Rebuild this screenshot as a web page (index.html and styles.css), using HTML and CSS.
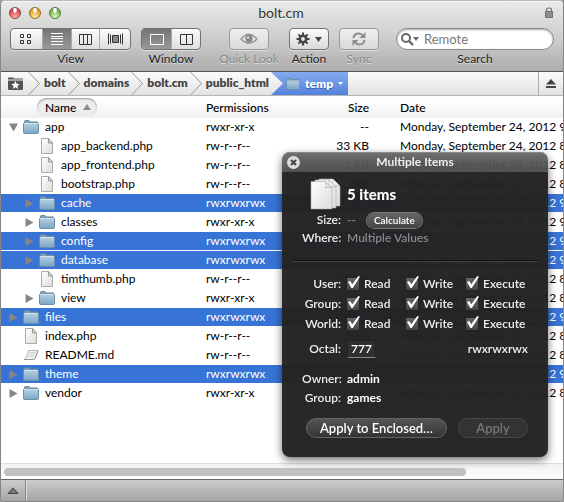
FILE: index.html
```
<!DOCTYPE html>
<html lang="en">
<head>
<meta charset="utf-8">
<title>bolt.cm</title>
<link rel="stylesheet" href="styles.css">
</head>
<body>
<svg class="defs" aria-hidden="true">
  <defs>
    <linearGradient id="gf" x1="0" y1="0" x2="0" y2="1"><stop offset="0" stop-color="#b4d0e1"/><stop offset="1" stop-color="#7ba5c4"/></linearGradient>
    <linearGradient id="gp" x1="0" y1="0" x2="1" y2="1"><stop offset="0" stop-color="#fff"/><stop offset="1" stop-color="#dcdcdc"/></linearGradient>
    <symbol id="folder" viewBox="0 0 16 14">
      <path d="M1.5 3V1.5Q1.5 .5 2.5 .5H5.5Q6.500 .5 6.500 1.500V2H14.500V4H1.500Z" fill="#7f9fb7" stroke="#65869f"/>
      <path d="M.5 3.500H15.500V12.500Q15.500 13.500 14.500 13.500H1.500Q.5 13.500 .5 12.500Z" fill="url(#gf)" stroke="#6890ad"/>
      <path d="M1 3.500H15" stroke="#d1e2ed"/>
    </symbol>
    <symbol id="file" viewBox="0 0 16 16">
      <path d="M2.500 .5H9.500L13.500 5V15.500H2.500Z" fill="url(#gp)" stroke="#aaa"/>
      <path d="M9.500 .5V5H13.500Z" fill="#ddd" stroke="#999"/>
    </symbol>
    <symbol id="doc" viewBox="0 0 16 12">
      <path d="M5.500 1.500H15L12 9.500Q11.500 10.500 10 10.500H1Q3 9.500 3.500 8Z" fill="#f1f1f1" stroke="#b5b5b5"/>
      <path d="M6.500 3.500H12.500M6 5.500H12M5 7.500H11" stroke="#d0d0d0"/>
      <path d="M1 10.500H10.500Q12 10 12.500 8.500L15 2" fill="none" stroke="#999"/>
    </symbol>
    <symbol id="right" viewBox="0 0 8 9"><path d="M0 0L8 4.500L0 9Z" fill="#868686"/></symbol>
    <symbol id="down" viewBox="0 0 9 8"><path d="M0 0H9L4.500 8Z" fill="#868686"/></symbol>
    <symbol id="chev" viewBox="0 0 12 23"><path d="M.5 0L11.500 11.500L.5 23" fill="none" stroke="#999"/></symbol>
  </defs>
</svg>
<div class="window">
  <header class="chrome">
    <div class="titlebar">
      <div class="lights"><button class="light red" aria-label="Close"></button><button class="light amber" aria-label="Minimise"></button><button class="light green" aria-label="Zoom"></button></div>
      <h1>bolt.cm</h1>
      <svg class="lock" viewBox="0 0 8 11"><path d="M1.500 5V3Q1.500 1 4 1T6.500 3V5" fill="none" stroke="#777" stroke-width="1.200"/><path d="M.5 4.500H7.500V10.500H.5Z" fill="#8d8d8d" stroke="#707070"/></svg>
    </div>
    <div class="toolbar">
      <div class="tool view">
        <div class="segments">
          <button aria-label="Icons"><svg width="12" height="12" viewBox="0 0 12 12" fill="none" stroke="#333"><path d="M.5 1.500h3v3h-3zM7.500 1.500h3v3h-3zM.5 7.500h3v3h-3zM7.500 7.500h3v3h-3z"/></svg></button>
          <button class="on" aria-label="List"><svg width="12" height="12" viewBox="0 0 12 12" fill="#fff"><path d="M0 0H12V1H0ZM0 3H12V4H0ZM0 5H12V6H0ZM0 8H12V9H0ZM0 11H12V12H0Z"/></svg></button>
          <button aria-label="Columns"><svg width="13" height="11" viewBox="0 0 13 11" fill="none" stroke="#333"><path d="M.5 .5H12.500V10.500H.5ZM4.500 0V11M8.500 0V11"/></svg></button>
          <button aria-label="Cover flow"><svg width="15" height="12" viewBox="0 0 15 12" fill="none" stroke="#333"><path d="M.5 .5V11.500M2.500 1.500V10.500M12.500 1.500V10.500M14.500 .5V11.500"/><path d="M4.500 2.500H10.500V9.500H4.500Z" fill="#888"/></svg></button>
        </div>
        <span>View</span>
      </div>
      <div class="tool win">
        <div class="segments">
          <button class="on" aria-label="Single pane"><svg width="14" height="11" viewBox="0 0 14 11" fill="none" stroke="#fff"><path d="M.5 .5H13.500V10.500H.5Z"/></svg></button>
          <button aria-label="Two panes"><svg width="13" height="11" viewBox="0 0 13 11" fill="none" stroke="#333"><path d="M.5 .5H12.500V10.500H.5ZM6.500 0V11"/></svg></button>
        </div>
        <span>Window</span>
      </div>
      <div class="tool look dim">
        <button class="btn" disabled aria-label="Quick Look"><svg width="18" height="12" viewBox="0 0 18 12"><path d="M0 6Q9 -5 18 6Q9 16 0 6Z" fill="#999"/><path d="M2 6Q5 3 6 3Q5 6 7 9Q4 8 2 6ZM16 6Q13 3 12 3Q13 6 11 9Q14 8 16 6Z" fill="#e5e5e5"/><circle cx="9" cy="5.500" r="3.500" fill="#888"/><circle cx="8" cy="4.500" r="1" fill="#fff"/></svg></button>
        <span>Quick Look</span>
      </div>
      <div class="tool">
        <button class="btn" aria-label="Action"><svg width="27" height="14" viewBox="0 0 27 14"><circle cx="7" cy="7" r="3.200" fill="none" stroke="#444" stroke-width="2.600"/><path d="M7 .5V3M7 11V13.500M.5 7H3M11 7H13.500M2.400 2.400L4.200 4.200M9.800 9.800L11.600 11.600M2.400 11.600L4.200 9.800M9.800 4.200L11.600 2.400" stroke="#444" stroke-width="2"/><path d="M19 5H26L22.500 10Z" fill="#444"/></svg></button>
        <span>Action</span>
      </div>
      <div class="tool dim">
        <button class="btn" disabled aria-label="Sync"><svg width="14" height="14" viewBox="0 0 14 14"><path d="M1.500 6Q2 1.500 7 1.500Q9.500 1.500 11 4M12.500 8Q12 12.500 7 12.500Q4.500 12.500 3 10" fill="none" stroke="#8d8d8d" stroke-width="2"/><path d="M13.500 0V6H7.500ZM.5 14V8H6.500Z" fill="#8d8d8d"/></svg></button>
        <span>Sync</span>
      </div>
      <div class="tool search">
        <div class="field">
          <svg width="18" height="13" viewBox="0 0 18 13"><circle cx="5" cy="5" r="4" fill="none" stroke="#666" stroke-width="2"/><path d="M8 8L12 12" stroke="#666" stroke-width="2.400"/><path d="M12 4H18L15 8Z" fill="#666"/></svg>
          <input id="q" type="text" placeholder="Remote">
        </div>
        <label for="q">Search</label>
      </div>
    </div>
  </header>
  <nav class="path">
    <a class="fav" href="#" aria-label="Favourites"><svg width="15" height="13" viewBox="0 0 15 13"><path d="M0 2.500V1.500Q0 .5 1 .5H5L6 1.500H15V2.500ZM0 3.500H15V12Q15 13 14 13H1Q0 13 0 12Z" fill="#555"/><path d="M7.500 3.800L8.700 6.700L11.800 6.900L9.400 8.900L10.200 12L7.500 10.300L4.800 12L5.600 8.900L3.200 6.900L6.300 6.700Z" fill="#fff"/></svg></a>
    <svg class="chev"><use href="#chev"/></svg><a href="#">bolt</a>
    <svg class="chev"><use href="#chev"/></svg><a href="#">domains</a>
    <svg class="chev"><use href="#chev"/></svg><a href="#">bolt.cm</a>
    <svg class="chev"><use href="#chev"/></svg><a href="#">public_html</a>
    <a class="current" href="#"><svg width="14" height="12" viewBox="0 0 16 14"><use href="#folder"/></svg>temp<svg width="5" height="3" viewBox="0 0 5 3"><path d="M0 0H5L2.500 3Z" fill="#fff"/></svg></a>
    <button class="eject" aria-label="Disconnect"><svg width="10" height="9" viewBox="0 0 10 9" fill="#444"><path d="M5 0L10 5.500H0ZM0 7H10V9H0Z"/></svg></button>
  </nav>
  <main class="list">
    <table>
      <colgroup><col class="c1"><col class="c2"><col class="c3"><col class="c4"></colgroup>
      <thead><tr><th><button class="sort">Name<svg width="8" height="6" viewBox="0 0 8 6"><path d="M4 0L8 6H0Z" fill="#8a8a8a"/></svg></button></th><th>Permissions</th><th class="num">Size</th><th>Date</th></tr></thead>
      <tbody>
        <tr><td><div class="n"><svg class="ar"><use href="#down"/></svg><svg class="ic"><use href="#folder"/></svg>app</div></td><td>rwxr-xr-x</td><td class="num">--</td><td>Monday, September 24, 2012 9</td></tr>
        <tr><td><div class="n in"><i class="ar"></i><svg class="ic f"><use href="#file"/></svg>app_backend.php</div></td><td>rw-r--r--</td><td class="num">33 KB</td><td>Monday, September 24, 2012 8</td></tr>
        <tr><td><div class="n in"><i class="ar"></i><svg class="ic f"><use href="#file"/></svg>app_frontend.php</div></td><td>rw-r--r--</td><td class="num">3 KB</td><td>Monday, September 24, 2012 8</td></tr>
        <tr><td><div class="n in"><i class="ar"></i><svg class="ic f"><use href="#file"/></svg>bootstrap.php</div></td><td>rw-r--r--</td><td class="num">3 KB</td><td>Monday, September 24, 2012 8</td></tr>
        <tr class="sel"><td><div class="n in"><svg class="ar"><use href="#right"/></svg><svg class="ic"><use href="#folder"/></svg>cache</div></td><td>rwxrwxrwx</td><td class="num">--</td><td>Monday, September 24, 2012 9</td></tr>
        <tr><td><div class="n in"><svg class="ar"><use href="#right"/></svg><svg class="ic"><use href="#folder"/></svg>classes</div></td><td>rwxr-xr-x</td><td class="num">--</td><td>Monday, September 24, 2012 9</td></tr>
        <tr class="sel"><td><div class="n in"><svg class="ar"><use href="#right"/></svg><svg class="ic"><use href="#folder"/></svg>config</div></td><td>rwxrwxrwx</td><td class="num">--</td><td>Monday, September 24, 2012 9</td></tr>
        <tr class="sel"><td><div class="n in"><svg class="ar"><use href="#right"/></svg><svg class="ic"><use href="#folder"/></svg>database</div></td><td>rwxrwxrwx</td><td class="num">--</td><td>Monday, September 24, 2012 9</td></tr>
        <tr><td><div class="n in"><i class="ar"></i><svg class="ic f"><use href="#file"/></svg>timthumb.php</div></td><td>rw-r--r--</td><td class="num">53 KB</td><td>Monday, September 24, 2012 8</td></tr>
        <tr><td><div class="n in"><svg class="ar"><use href="#right"/></svg><svg class="ic"><use href="#folder"/></svg>view</div></td><td>rwxr-xr-x</td><td class="num">--</td><td>Monday, September 24, 2012 8</td></tr>
        <tr class="sel"><td><div class="n"><svg class="ar"><use href="#right"/></svg><svg class="ic"><use href="#folder"/></svg>files</div></td><td>rwxrwxrwx</td><td class="num">--</td><td>Monday, September 24, 2012 9</td></tr>
        <tr><td><div class="n"><i class="ar"></i><svg class="ic f"><use href="#file"/></svg>index.php</div></td><td>rw-r--r--</td><td class="num">130 B</td><td>Monday, September 24, 2012 8</td></tr>
        <tr><td><div class="n"><i class="ar"></i><svg class="ic"><use href="#doc"/></svg>README.md</div></td><td>rw-r--r--</td><td class="num">515 B</td><td>Monday, September 24, 2012 8</td></tr>
        <tr class="sel"><td><div class="n"><svg class="ar"><use href="#right"/></svg><svg class="ic"><use href="#folder"/></svg>theme</div></td><td>rwxrwxrwx</td><td class="num">--</td><td>Monday, September 24, 2012 9</td></tr>
        <tr><td><div class="n"><svg class="ar"><use href="#right"/></svg><svg class="ic"><use href="#folder"/></svg>vendor</div></td><td>rwxr-xr-x</td><td class="num">--</td><td>Monday, September 24, 2012 8</td></tr>
      </tbody>
    </table>
  </main>
  <div class="scroll"><div class="thumb"></div></div>
  <footer class="status"><button aria-label="Show transfers"><svg width="12" height="7" viewBox="0 0 12 7"><path d="M6 .8L11 6.500H1Z" fill="#777" stroke="#444"/></svg></button></footer>

  <section class="panel" aria-label="Multiple Items">
    <div class="ptitle"><button class="close" aria-label="Close panel"><svg width="7" height="7" viewBox="0 0 7 7"><path d="M1 1L6 6M6 1L1 6" stroke="#444" stroke-width="2"/></svg></button><h2>Multiple Items</h2></div>
    <div class="pbody">
      <div class="head">
        <svg width="31" height="32" viewBox="0 0 31 32"><g fill="url(#gp)" stroke="#aaa" stroke-width=".6"><path d="M9 1H23L30 8V28H9Z"/><path d="M23 1V8H30Z"/><path d="M5 2H19L26 9V30H5Z"/><path d="M19 2V9H26Z"/><path d="M1 3.500H15L22 10V31H1Z"/><path d="M15 3.500Q18 8 15 10Q19 8 22 10Z"/></g></svg>
        <strong>5 items</strong>
      </div>
      <dl class="info">
        <dt>Size:</dt><dd class="faint">-- <button class="calc">Calculate</button></dd>
        <dt>Where:</dt><dd class="faint">Multiple Values</dd>
      </dl>
      <hr>
      <div class="perms">
        <span>User:</span><label><input type="checkbox" checked>Read</label><label><input type="checkbox" checked>Write</label><label><input type="checkbox" checked>Execute</label>
        <span>Group:</span><label><input type="checkbox" checked>Read</label><label><input type="checkbox" checked>Write</label><label><input type="checkbox" checked>Execute</label>
        <span>World:</span><label><input type="checkbox" checked>Read</label><label><input type="checkbox" checked>Write</label><label><input type="checkbox" checked>Execute</label>
      </div>
      <div class="octal"><label for="oct">Octal:</label><input id="oct" type="text" value="777"><output for="oct">rwxrwxrwx</output></div>
      <dl class="info own"><dt>Owner:</dt><dd>admin</dd><dt>Group:</dt><dd>games</dd></dl>
      <div class="actions"><button class="wide">Apply to Enclosed…</button><button disabled>Apply</button></div>
    </div>
  </section>
</div>
</body>
</html>
```
FILE: styles.css
```
* { box-sizing: border-box; }
html, body { height: 100%; }
body { margin: 0; background: #999; font: 12px/18px Lato, "Noto Sans", sans-serif; color: #000; }
button { font: inherit; color: inherit; padding: 0; border: 0; background: none; }
svg { display: block; flex: none; }
a { color: inherit; text-decoration: none; }
.defs { position: absolute; width: 0; height: 0; }

.window { position: relative; min-height: 100%; display: flex; flex-direction: column; overflow: hidden; border: 1px solid #858585; border-top-color: #bbb; border-radius: 5px; background: #fff; }

.chrome { background: linear-gradient(#e9e9e9, #cfcfcf 50%, #adadad); border-bottom: 1px solid #555; box-shadow: inset 0 1px #f5f5f5; }
.titlebar { display: flex; align-items: center; justify-content: space-between; height: 23px; padding: 0 10px 0 8px; }
.lights { display: flex; gap: 8px; width: 60px; }
.light { width: 12px; height: 12px; border-radius: 50%; border: 1px solid #8a4a48; }
.red { background: radial-gradient(ellipse at 50% 20%, #fff 0 15%, transparent 35%), radial-gradient(circle at 50% 90%, #ffb0a8, #d9434a 70%); }
.amber { background: radial-gradient(ellipse at 50% 20%, #fff 0 15%, transparent 35%), radial-gradient(circle at 50% 90%, #fff09a, #e39b31 70%); border-color: #96682c; }
.green { background: radial-gradient(ellipse at 50% 20%, #fff 0 15%, transparent 35%), radial-gradient(circle at 50% 90%, #e0ffb0, #6fb04d 70%); border-color: #4f7c3a; }
.titlebar h1 { margin: 0; font-size: 14px; font-weight: 400; color: #333; text-shadow: 0 1px #f4f4f4; }
.lock { width: 8px; height: 11px; margin-left: 52px; }

.toolbar { display: flex; gap: 10px; height: 47px; padding: 4px 9px 0; }
.tool { display: flex; flex: none; flex-direction: column; align-items: center; color: #222; text-shadow: 0 1px #ddd; line-height: 18px; white-space: nowrap; }
.dim { color: #888; }
.look { width: 60px; margin-left: 8px; }
.segments { display: flex; height: 22px; border: 1px solid #727272; border-radius: 4px; background: linear-gradient(#fbfbfb, #dedede); overflow: hidden; box-shadow: 0 1px #ddd; }
.segments button { display: grid; place-items: center; width: 29px; border-left: 1px solid #aaa; }
.segments button:first-child { border-left: 0; }
.view button:first-child, .view button:last-child { width: 31px; }
.segments .on { background: linear-gradient(#757575, #999); }
.view .segments { width: 121px; }
.win .segments { width: 60px; }
.btn { display: grid; place-items: center; width: 40px; height: 22px; border: 1px solid #757575; border-radius: 4px; background: linear-gradient(#fbfbfb, #d9d9d9); box-shadow: 0 1px #ddd; }
.dim .btn { border-color: #999; background: linear-gradient(#efefef, #d9d9d9); }
.search { flex: 1; min-width: 0; align-items: stretch; margin-left: 7px; }
.search label { text-align: center; }
.field { display: flex; align-items: center; gap: 5px; height: 22px; padding: 0 5px 0 4px; border: 1px solid #888; border-radius: 11px; background: #fff; box-shadow: inset 0 1px 2px #aaa; }
.field input { flex: 1; min-width: 0; border: 0; padding: 0; outline: 0; background: none; font: inherit; font-size: 13px; }
.field input::placeholder { color: #777; opacity: 1; }

.path { display: flex; align-items: center; height: 24px; padding-left: 7px; border-bottom: 1px solid #b5b5b5; background: linear-gradient(#fbfbfb, #e2e2e2); color: #444; font-weight: 800; line-height: 22px; }
.path a { padding: 0 2px 1px 4px; }
.path .fav { padding: 0 5px 0 0; }
.chev { width: 12px; height: 23px; }
.path .current { display: flex; align-items: center; gap: 5px; height: 23px; padding: 0 5px 0 15px; color: #fff; background: linear-gradient(#84abee, #5482dc); clip-path: polygon(0 0, 100% 0, 100% 100%, 0 100%, 12px 50%); text-shadow: 0 1px 1px #3157a8; }
.eject { display: grid; place-items: center; width: 25px; height: 23px; margin-left: auto; border-left: 1px solid #aaa; }

.list { flex: 1; overflow: hidden; }
table { width: 640px; min-width: 100%; table-layout: fixed; border-collapse: separate; border-spacing: 0; }
.c1 { width: 205px; } .c2 { width: 93px; } .c3 { width: 70px; }
th, td { padding: 0; text-align: left; font-weight: 400; white-space: nowrap; }
th { height: 22px; font-weight: 500; line-height: 21px; background: linear-gradient(#fff 20%, #f0f0f0); }
td { height: 19px; line-height: 18px; border-bottom: 1px solid #fff; }
.num { text-align: right; }
th:last-child, td:last-child { padding-left: 31px; }
.sel td { background: #3873d6; background-clip: padding-box; color: #fff; }
.sort { display: flex; align-items: center; gap: 7px; height: 18px; margin-left: 36px; padding: 0 6px 0 8px; border-radius: 9px; background: #ededed; box-shadow: inset 0 1px 2px #999; }
.n { display: flex; align-items: center; height: 18px; padding-left: 8px; }
.in { padding-left: 24px; }
.ar { width: 9px; height: 9px; margin-right: 5px; }
.ic { width: 16px; height: 14px; margin-right: 6px; }
.ic.f { height: 16px; }

.scroll { height: 16px; padding: 4px 97px 0 3px; border-top: 1px solid #ddd; background: linear-gradient(#f1f1f1, #fff); }
.thumb { height: 8px; border-radius: 4px; background: #c1c1c1; }
.status { height: 22px; border-top: 1px solid #666; background: linear-gradient(#ccc, #a4a4a4); }
.status button { display: grid; place-items: center; width: 25px; height: 21px; border-right: 1px solid #888; box-shadow: 1px 0 #ddd; }

.panel { position: absolute; top: 151px; left: 281px; width: 266px; overflow: hidden; border-radius: 8px; color: #eee; font-weight: 600; filter: drop-shadow(0 3px 4px rgba(0, 0, 0, .6)); }
.ptitle { display: flex; align-items: center; height: 20px; padding: 0 5px; background: linear-gradient(rgba(105, 105, 105, .93), rgba(78, 78, 78, .9)); box-shadow: inset 0 1px #888; }
.ptitle h2 { flex: 1; margin: 0 13px 0 0; text-align: center; font-size: 12px; font-weight: 700; }
.close { display: grid; place-items: center; width: 13px; height: 13px; border-radius: 50%; background: #ddd; }
.pbody { height: 285px; padding: 4px 20px 0; background: rgba(36, 36, 36, .95); }
.head { display: flex; align-items: center; gap: 6px; height: 35px; padding-left: 8px; }
.head strong { font-size: 15px; font-weight: 900; color: #fff; }
.info { display: grid; grid-template-columns: 39px 1fr; column-gap: 6px; margin: 0; }
.info dt { text-align: right; }
.info dd { margin: 0; display: flex; align-items: center; gap: 11px; color: #fff; font-weight: 700; }
.info .faint { color: #888; font-weight: 600; }
.calc { height: 15px; padding: 0 7px; border-radius: 8px; background: linear-gradient(#666, #444); box-shadow: 0 0 0 1px #777; color: #fff; font-size: 10px; line-height: 14px; }
hr { margin: 13px -10px 12px; border: 0; border-top: 1px solid #111; border-bottom: 1px solid #444; }
.perms { display: grid; grid-template-columns: 39px 53px 54px 1fr; column-gap: 6px; grid-auto-rows: 20px; line-height: 20px; }
.perms > span { text-align: right; }
.perms label { display: flex; align-items: center; gap: 5px; }
.perms input { appearance: none; position: relative; width: 12px; height: 12px; margin: 0; background: linear-gradient(#666, #444); box-shadow: 0 0 0 1px #222; }
.perms input:checked::before { content: ""; position: absolute; left: 1px; top: -2px; width: 12px; height: 12px; background: #fff; clip-path: polygon(0 50%, 18% 42%, 36% 68%, 86% 0, 100% 6%, 40% 100%, 28% 100%); }
.octal { display: flex; align-items: center; height: 30px; gap: 6px; }
.octal label { width: 39px; text-align: right; }
.octal input { width: 29px; height: 18px; padding: 0; text-align: center; border: 1px solid #222; border-bottom-color: #888; background: #303030; color: #fff; font: inherit; }
.octal output { margin-left: auto; }
.own { margin-top: 5px; line-height: 19px; }
.actions { display: flex; gap: 11px; padding: 11px 0 0 4px; }
.actions button { width: 70px; height: 20px; border: 1px solid #666; border-radius: 10px; background: linear-gradient(#555, #333); font-size: 13px; line-height: 17px; }
.actions .wide { width: 141px; color: #fff; }
.actions button:disabled { border-color: #484848; background: #333; color: #777; }
```
